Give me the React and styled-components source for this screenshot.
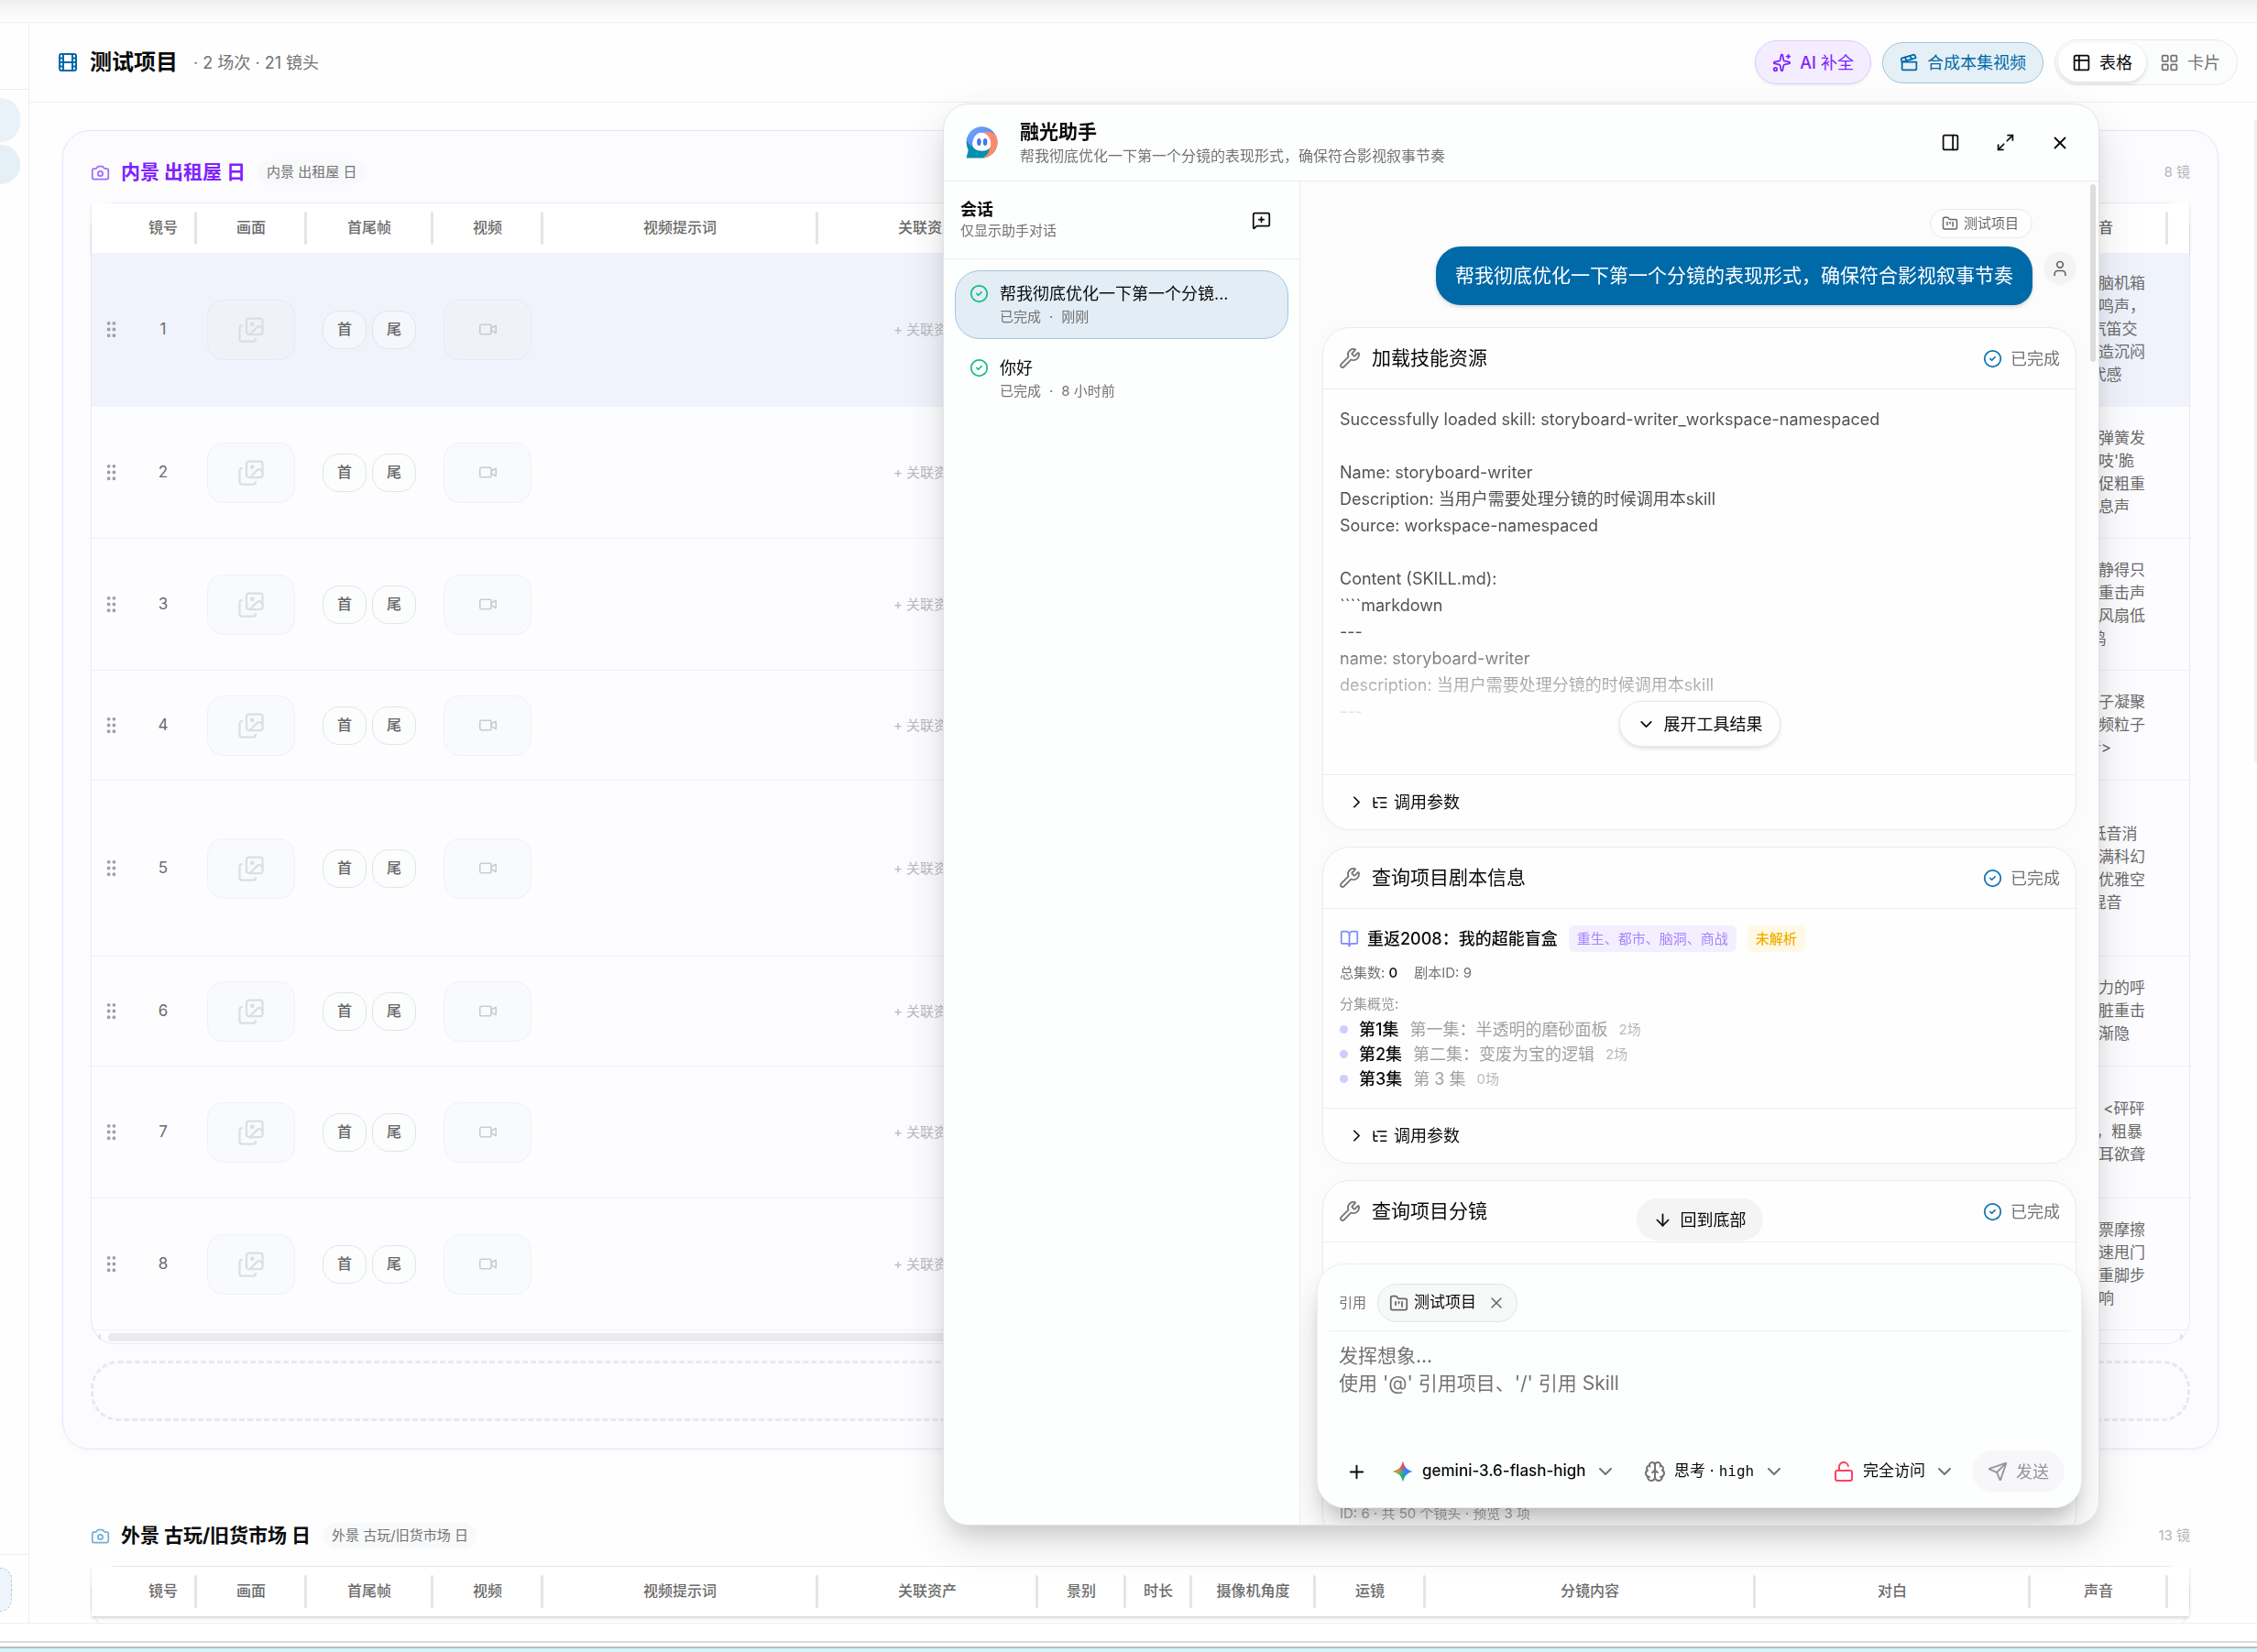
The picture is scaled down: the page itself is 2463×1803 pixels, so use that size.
import React from "react";
import styled, { createGlobalStyle, css } from "styled-components";
import {
  ArrowDown, BookOpen, Brain, Camera, ChevronDown, ChevronRight, CircleCheck, Clapperboard,
  Film, FolderKanban, GripVertical, Images, LayoutGrid, ListTree, LockOpen, Maximize2,
  MessageSquarePlus, PanelRight, Plus, Send, Sparkles, Table2, User, Video, Wrench, X,
} from "lucide-react";

const Global = createGlobalStyle`
  * { box-sizing: border-box; }
  body {
    margin: 0;
    background: #fff;
    color: #0a0a0a;
    font-family: Inter, "Noto Sans CJK SC", sans-serif;
    font-size: 18px;
    line-height: 1.5;
  }
  button, select, textarea { font: inherit; color: inherit; }
  button { border: 0; padding: 0; background: none; cursor: pointer; }
  h1, h2, h3, p, ul { margin: 0; padding: 0; }
`;

/* ---------- shell ---------- */

const Page = styled.div`
  height: 100vh;
  display: flex;
  flex-direction: column;
  overflow: hidden;
`;
const TopStrip = styled.div`
  flex: none;
  height: 24px;
  background: linear-gradient(#efefef, #fff);
`;
const Workspace = styled.div`
  flex: 1;
  min-height: 0;
  display: flex;
  border-top: 1px solid #eceff0;
  border-bottom: 1px solid #eceeee;
  background: #fefefe;
`;
const BottomEdge = styled.div`
  flex: none;
  height: 31px;
  border-bottom: 4px solid #d3f3fa;
  background: linear-gradient(#fff 19px, #dadada 19px, #dadada 21px, #fff 21px, #fff 25px, #b3bfc1 25px);
`;

const Sidebar = styled.nav`
  flex: none;
  width: 32px;
  display: flex;
  flex-direction: column;
  border-right: 1px solid #ebefef;
`;
const SideTop = styled.div`
  height: 73px;
  border-bottom: 1px solid #e9eef0;
`;
const SideItems = styled.div`
  flex: 1;
  display: flex;
  flex-direction: column;
  gap: 3px;
  padding-top: 9px;
`;
const SideItem = styled.button`
  width: 22px;
  height: ${(p) => p.$h}px;
  border-radius: 0 21px 21px 0;
  background: ${(p) => p.$bg};
`;
const SideBottom = styled.div`
  height: 75px;
  padding-top: 14px;
  border-top: 1px solid #ebefef;
`;
const SideAdd = styled.button`
  display: block;
  width: 13px;
  height: 48px;
  border: 1px dashed #a9cde6;
  border-left: 0;
  border-radius: 0 21px 21px 0;
  background: #eff5fb;
`;

const Main = styled.main`
  flex: 1;
  min-width: 0;
  display: flex;
  flex-direction: column;
`;
const MainHeader = styled.header`
  flex: none;
  height: 87px;
  display: flex;
  align-items: center;
  gap: 12px;
  padding: 0 21px 0 30px;
  border-bottom: 1px solid #eceeef;
`;
const ProjectTitle = styled.h1`
  font-size: 24px;
  line-height: 36px;
  font-weight: 700;
`;
const Muted = styled.span`
  color: #737373;
  font-size: 18px;
`;
const HeaderActions = styled.div`
  margin-left: auto;
  display: flex;
  align-items: center;
  gap: 12px;
`;
const PillButton = styled.button`
  display: flex;
  align-items: center;
  gap: 9px;
  height: ${(p) => p.$h}px;
  padding: 0 18px;
  border-radius: 24px;
  font-size: 18px;
  b { font-weight: 500; }
  ${(p) =>
    p.$tone === "violet"
      ? css`color: #7f22fe; background: #f3edff; border: 1px solid #dccbfd; box-shadow: 0 2px 3px rgba(0,0,0,.05);`
      : css`color: #0069a8; background: #e5f0f6; border: 1px solid #9cc5df;`}
`;
const Segmented = styled.div`
  display: flex;
  align-items: center;
  height: 50px;
  padding: 3px;
  border: 1px solid #e9eaea;
  border-radius: 25px;
  background: #fbfcfc;
`;
const Segment = styled.button`
  display: flex;
  align-items: center;
  gap: 9px;
  height: 42px;
  padding: 0 15px;
  border-radius: 21px;
  font-size: 18px;
  color: ${(p) => (p.$on ? "#0a0a0a" : "#737373")};
  ${(p) => p.$on && css`background: #fff; box-shadow: 0 2px 5px rgba(0,0,0,.14);`}
`;

const Body = styled.div`
  flex: 1;
  min-height: 0;
  display: flex;
  overflow: hidden;
`;
const Sections = styled.div`
  flex: 1;
  min-width: 0;
  display: flex;
  flex-direction: column;
  gap: 48px;
  padding: 30px 36px 0;
`;
const PageScroll = styled.div`
  flex: none;
  width: 6px;
  padding: 18px 0 0 3px;
`;
const PageThumb = styled.div`
  height: 702px;
  border-radius: 3px 0 0 3px;
  background: #eeefef;
`;

/* ---------- scene sections ---------- */

const SceneCard = styled.section`
  flex: none;
  padding: 30px;
  border: 1px solid ${(p) => (p.$active ? "#e9e2fd" : "transparent")};
  border-radius: 30px;
  ${(p) => p.$active && css`background: #fcfcff; box-shadow: 0 3px 9px rgba(90,70,160,.03);`}
`;
const SceneHead = styled.div`
  display: flex;
  align-items: center;
  height: 30px;
  margin-bottom: 18px;
  > svg { color: ${(p) => (p.$active ? "#a368fe" : "#72b0d8")}; }
`;
const SceneTitle = styled.h2`
  margin-left: 12px;
  font-size: 21px;
  line-height: 30px;
  font-weight: 700;
  color: ${(p) => (p.$active ? "#7f22fe" : "#0a0a0a")};
`;
const SceneTag = styled.span`
  margin-left: 14px;
  padding: 0 9px;
  border-radius: 14px;
  background: #f8f9fa;
  color: #737373;
  font-size: 15px;
  line-height: 28px;
`;
const ShotCount = styled.span`
  margin-left: auto;
  color: #b4b4b6;
  font-size: 15px;
`;
const TableBox = styled.div`
  border: 1px solid #e9eaee;
  border-radius: 27px;
  background: rgba(255,255,255,.3);
`;
const ShotTable = styled.table`
  width: 100%;
  table-layout: fixed;
  border-collapse: separate;
  border-spacing: 0;
`;
const HeadRow = styled.tr`
  background: #fff;
  box-shadow: 0 2px 3px rgba(0,0,0,.16);
`;
const Th = styled.th`
  position: relative;
  height: 54px;
  padding: 0 0 3px;
  color: #6b6b6b;
  font-size: 16px;
  font-weight: 500;
  ${(p) =>
    p.$handle &&
    css`
      &::after {
        content: "";
        position: absolute;
        top: 9px;
        bottom: 9px;
        right: -1px;
        width: 3px;
        border-radius: 2px;
        background: #e5e5e5;
      }
    `}
`;
const ShotRow = styled.tr`
  height: ${(p) => p.$h}px;
  background: ${(p) => (p.$selected ? "#f0f3fc" : "transparent")};
`;
const Td = styled.td`
  padding: 0;
  border-bottom: 1px solid #f0f1f4;
  color: #6b6b6b;
  font-size: 17px;
  line-height: 25px;
  text-align: center;
  vertical-align: middle;
  white-space: pre-line;
  > svg { display: block; margin: 0 auto; color: #a0a0a3; }
`;
const Thumb = styled.button`
  width: 96px;
  height: 66px;
  display: inline-flex;
  align-items: center;
  justify-content: center;
  vertical-align: middle;
  border: 1px solid rgba(20,60,60,.045);
  border-radius: 18px;
  background: rgba(238,244,240,.24);
  color: ${(p) => (p.$strong ? "#c9cbce" : "#dcdee0")};
`;
const FramePair = styled.div`
  display: flex;
  justify-content: center;
  gap: 6px;
`;
const FrameButton = styled.button`
  width: 48px;
  height: 42px;
  border: 1px solid #e3e5e8;
  border-radius: 18px;
  background: rgba(250,252,250,.4);
  color: #666;
  font-size: 16px;
  font-weight: 500;
`;
const LinkAsset = styled.button`
  color: #b9babd;
  font-size: 15px;
`;
const ScrollRow = styled.div`
  display: flex;
  align-items: center;
  gap: 8px;
  height: 14px;
  padding: 0 6px;
`;
const ScrollTrack = styled.div`
  flex: 1;
`;
const ScrollThumb = styled.div`
  width: 82%;
  height: 9px;
  border-radius: 4px;
  background: #ebebed;
`;
const ScrollArrow = styled.span`
  border: 4px solid transparent;
  ${(p) => (p.$right ? "border-left-color: #e2e2e5; border-right-width: 0;" : "border-right-color: #e2e2e5; border-left-width: 0;")}
`;
const DropZone = styled.div`
  height: 66px;
  margin-top: 18px;
  border: 3px dashed #e9e9ec;
  border-radius: 30px;
`;

const columns = [
  ["", 42], ["镜号", 72, 1], ["画面", 120, 1], ["首尾帧", 138, 1], ["视频", 120, 1], ["视频提示词", 300, 1],
  ["关联资产", 240, 1], ["景别", 96, 1], ["时长", 72, 1], ["摄像机角度", 135, 1], ["运镜", 120, 1],
  ["分镜内容", 360, 1], ["对白", 300, 1], ["声音", 150, 1], ["", 0],
];

const shots = [
  { h: 168, sound: "老旧电脑机箱\n低沉嗡鸣声，\n远处汽笛交\n织，营造沉闷\n年代感" },
  { h: 144, sound: "床垫旧弹簧发\n出'咯吱'脆\n响，急促粗重\n的喘息声" },
  { h: 144, sound: "四周安静得只\n剩心脏重击声\n和老旧风扇低\n鸣" },
  { h: 120, sound: "蓝光粒子凝聚\n声，高频粒子\n音>" },
  { h: 192, sound: "超重低音消\n失，充满科幻\n感且极优雅空\n灵混音" },
  { h: 120, sound: "急促有力的呼\n吸与心脏重击\n声音渐隐" },
  { h: 144, sound: "剧烈敲 <砰砰\n砰砰>，粗暴\n吼叫震耳欲聋" },
  { h: 144, sound: "指尖钞票摩擦\n声，快速甩门\n声与沉重脚步\n声响" },
];

function Shots({ rows }) {
  return (
    <ShotTable>
      <colgroup>
        {columns.map(([, w], i) => <col key={i} style={w ? { width: w } : undefined} />)}
      </colgroup>
      <thead>
        <HeadRow>
          {columns.map(([label, , handle], i) => <Th key={i} $handle={handle}>{label}</Th>)}
        </HeadRow>
      </thead>
      <tbody>
        {rows.map((s, i) => (
          <ShotRow key={i} $h={s.h} $selected={i === 0}>
            <Td><GripVertical size={23} /></Td>
            <Td>{i + 1}</Td>
            <Td><Thumb aria-label="画面"><Images size={30} strokeWidth={1.8} /></Thumb></Td>
            <Td>
              <FramePair>
                <FrameButton>首</FrameButton>
                <FrameButton>尾</FrameButton>
              </FramePair>
            </Td>
            <Td><Thumb $strong aria-label="视频"><Video size={21} strokeWidth={1.8} /></Thumb></Td>
            <Td />
            <Td><LinkAsset>+ 关联资产</LinkAsset></Td>
            <Td /><Td /><Td /><Td /><Td /><Td />
            <Td>{s.sound}</Td>
            <Td />
          </ShotRow>
        ))}
      </tbody>
    </ShotTable>
  );
}

function Scene({ active, title, count, rows = [] }) {
  return (
    <SceneCard $active={active}>
      <SceneHead $active={active}>
        <Camera size={21} />
        <SceneTitle $active={active}>{title}</SceneTitle>
        <SceneTag>{title}</SceneTag>
        <ShotCount>{count} 镜</ShotCount>
      </SceneHead>
      <TableBox>
        <Shots rows={rows} />
        <ScrollRow>
          {active && (
            <>
              <ScrollArrow />
              <ScrollTrack><ScrollThumb /></ScrollTrack>
              <ScrollArrow $right />
            </>
          )}
        </ScrollRow>
      </TableBox>
      {active && <DropZone />}
    </SceneCard>
  );
}

/* ---------- assistant window ---------- */

const Assistant = styled.aside`
  position: fixed;
  top: 113px;
  right: 172px;
  bottom: 138px;
  width: 1262px;
  display: flex;
  flex-direction: column;
  overflow: hidden;
  border: 1px solid #e2e3e3;
  border-radius: 28px;
  background: #fdfefe;
  box-shadow: 0 18px 48px rgba(0,0,0,.12), 0 15px 24px -6px rgba(0,0,0,.12);
`;
const AssistantHead = styled.header`
  flex: none;
  height: 84px;
  display: flex;
  align-items: center;
  gap: 24px;
  padding: 0 18px 0 24px;
  border-bottom: 1px solid #ebeded;
`;
const HeadText = styled.div`
  flex: 1;
`;
const AssistantTitle = styled.h2`
  font-size: 21px;
  line-height: 28px;
  font-weight: 700;
`;
const AssistantSub = styled.p`
  color: #737373;
  font-size: 16px;
  line-height: 24px;
`;
const HeadTools = styled.div`
  display: flex;
  gap: 12px;
`;
const IconButton = styled.button`
  width: 48px;
  height: 48px;
  display: flex;
  align-items: center;
  justify-content: center;
`;
const AssistantBody = styled.div`
  flex: 1;
  min-height: 0;
  display: flex;
`;
const Sessions = styled.div`
  flex: none;
  width: 389px;
  border-right: 1px solid #ebeded;
`;
const SessionsHead = styled.div`
  height: 85px;
  display: flex;
  align-items: center;
  justify-content: space-between;
  padding: 0 18px;
  border-bottom: 1px solid #eef0f0;
`;
const SessionsTitle = styled.h3`
  font-size: 18px;
  line-height: 24px;
  font-weight: 700;
`;
const Small = styled.p`
  color: #737373;
  font-size: 15px;
  line-height: 22px;
`;
const SessionList = styled.div`
  display: flex;
  flex-direction: column;
  gap: 6px;
  padding: 12px;
`;
const Session = styled.button`
  height: 75px;
  display: flex;
  gap: 12px;
  padding: 11px 15px;
  text-align: left;
  border: 1px solid ${(p) => (p.$on ? "#9fc6e0" : "transparent")};
  border-radius: 27px;
  background: ${(p) => (p.$on ? "#e3edf5" : "transparent")};
  > svg { flex: none; margin-top: 3px; color: #10bc82; }
`;
const SessionName = styled.p`
  font-size: 18px;
  line-height: 27px;
`;
const SessionMeta = styled(Small)`
  display: flex;
  gap: 9px;
  line-height: 24px;
`;

const Conversation = styled.div`
  position: relative;
  flex: 1;
  min-width: 0;
  overflow: hidden;
  background: #fcfcfd;
`;
const ConvThumb = styled.div`
  position: absolute;
  top: 3px;
  right: 3px;
  width: 6px;
  height: 194px;
  border-radius: 3px;
  background: #dcdddd;
`;
const Messages = styled.div`
  display: flex;
  flex-direction: column;
  padding: 30px 24px 0;
`;
const UserRef = styled.span`
  align-self: flex-end;
  display: flex;
  align-items: center;
  gap: 6px;
  height: 32px;
  margin: 0 48px 9px 0;
  padding: 0 14px 0 12px;
  border: 1px solid #e9ebeb;
  border-radius: 16px;
  background: #fefefe;
  color: #666;
  font-size: 15px;
`;
const UserRow = styled.div`
  display: flex;
  justify-content: flex-end;
  gap: 12px;
  margin-bottom: 24px;
`;
const Bubble = styled.p`
  padding: 17px 21px;
  border-radius: 27px 27px 21px 27px;
  background: #0069a8;
  color: #fff;
  font-size: 21px;
  line-height: 30px;
  box-shadow: 0 2px 4px rgba(0,0,0,.15);
`;
const Avatar = styled.span`
  width: 36px;
  height: 36px;
  margin-top: 6px;
  display: flex;
  align-items: center;
  justify-content: center;
  border-radius: 50%;
  background: #f4f4f4;
  color: #666;
`;
const ToolCard = styled.article`
  margin-bottom: 18px;
  border: 1px solid #e9ebeb;
  border-radius: 30px;
  background: #fefefe;
  box-shadow: 0 2px 24px rgba(0,0,0,.02);
`;
const ToolHead = styled.header`
  height: 67px;
  display: flex;
  align-items: center;
  gap: 12px;
  padding: 0 17px;
  border-bottom: 1px solid #ebeded;
  > svg { color: #737373; }
`;
const ToolName = styled.h3`
  flex: 1;
  font-size: 21px;
  font-weight: 400;
`;
const Status = styled.span`
  display: flex;
  align-items: center;
  gap: 9px;
  color: #737373;
  font-size: 18px;
  svg { color: #0f72b0; }
`;
const ToolBody = styled.div`
  position: relative;
  padding: 18px;
`;
const Result = styled.pre`
  height: 384px;
  margin: 0;
  overflow: hidden;
  font: inherit;
  color: #525252;
  font-size: 18px;
  line-height: 29px;
  mask-image: linear-gradient(#000 250px, transparent 350px);
`;
const Floating = styled.button`
  position: absolute;
  left: 50%;
  transform: translateX(-50%);
  display: flex;
  align-items: center;
  gap: 9px;
  padding: 0 18px;
  border-radius: 25px;
  font-size: 18px;
`;
const Expand = styled(Floating)`
  bottom: 30px;
  height: 50px;
  border: 1px solid #e8e9e9;
  background: #fefefe;
  box-shadow: 0 2px 4px rgba(0,0,0,.12);
`;
const ToBottom = styled(Floating)`
  bottom: 310px;
  height: 46px;
  background: #f4f4f4;
`;
const ToolFoot = styled.button`
  width: 100%;
  height: 60px;
  display: flex;
  align-items: center;
  gap: 6px;
  padding: 0 26px;
  border-top: 1px solid #ebeded;
  font-size: 18px;
`;

const ScriptRow = styled.div`
  display: flex;
  align-items: center;
  gap: 12px;
`;
const ScriptName = styled.span`
  display: flex;
  align-items: center;
  gap: 9px;
  font-size: 18px;
  font-weight: 500;
  > svg { color: #818cf8; }
`;
const Tag = styled.span`
  padding: 0 9px;
  border-radius: 6px;
  font-size: 15px;
  line-height: 29px;
  font-weight: ${(p) => (p.$amber ? 500 : 400)};
  color: ${(p) => (p.$amber ? "#f0b000" : "#a684ff")};
  background: ${(p) => (p.$amber ? "#fff8e5" : "#f4efff")};
`;
const Facts = styled(Small)`
  display: flex;
  gap: 18px;
  margin: 12px 0;
  b { color: #0a0a0a; font-weight: 500; }
`;
const Dim = styled(Small)`
  margin-bottom: 3px;
  color: #999;
`;
const Episodes = styled.ul`
  list-style: none;
`;
const Episode = styled.li`
  display: flex;
  align-items: center;
  gap: 12px;
  line-height: 27px;
  color: #a1a1a1;
  &::before {
    content: "";
    width: 9px;
    height: 9px;
    border-radius: 50%;
    background: #cacfff;
  }
  b { color: #0a0a0a; font-weight: 500; }
  small { font-size: 15px; color: #b9b9b9; }
`;
const Preview = styled.div`
  min-height: 325px;
  display: flex;
  align-items: flex-end;
  padding: 18px;
`;
const PreviewNote = styled(Small)`
  color: #a3a3a3;
`;

const Composer = styled.form`
  position: absolute;
  left: 18px;
  right: 18px;
  bottom: 18px;
  height: 267px;
  display: flex;
  flex-direction: column;
  border: 1px solid #eceeee;
  border-radius: 30px;
  background: #fdfefe;
  box-shadow: 0 24px 36px -6px rgba(0,0,0,.2), 0 12px 15px -6px rgba(0,0,0,.1);
`;
const RefRow = styled.div`
  display: flex;
  align-items: center;
  gap: 12px;
  margin: 0 12px;
  padding: 21px 11px 9px;
  border-bottom: 1px solid #eff1f1;
  color: #737373;
  font-size: 15px;
`;
const RefChip = styled.span`
  display: flex;
  align-items: center;
  gap: 6px;
  height: 42px;
  padding: 0 12px;
  border: 1px solid #e4e5e5;
  border-radius: 21px;
  background: #f7f8f8;
  color: #0a0a0a;
  font-size: 17px;
  svg { display: block; color: #666; }
  button { margin-left: 6px; }
`;
const Prompt = styled.textarea`
  flex: 1;
  padding: 12px 23px 0;
  border: 0;
  outline: 0;
  resize: none;
  background: none;
  font-size: 21px;
  line-height: 30px;
  &::placeholder { color: #737373; }
`;
const Toolbar = styled.div`
  display: flex;
  align-items: center;
  padding: 0 18px 15px;
`;
const Picker = styled.label`
  display: flex;
  align-items: center;
  gap: 9px;
  padding: 0 15px;
  font-size: 17px;
  > svg:last-child { color: #737373; }
  > svg:first-child { color: ${(p) => p.$icon || "#737373"}; }
`;
const PickerText = styled.span`
  display: flex;
  gap: 5px;
  align-items: center;
`;
const Choice = styled.select`
  appearance: none;
  padding: 0;
  border: 0;
  outline: 0;
  background: none;
  font-family: ${(p) => (p.$mono ? `"DejaVu Sans Mono", monospace` : "inherit")};
  font-size: ${(p) => (p.$mono ? 16 : 17)}px;
  font-weight: ${(p) => (p.$medium ? 500 : 400)};
`;
const SendButton = styled.button`
  display: flex;
  align-items: center;
  gap: 9px;
  height: 46px;
  margin-left: 3px;
  padding: 0 17px;
  border-radius: 23px;
  background: #f7f7fa;
  color: #969698;
  font-size: 18px;
`;
const Spacer = styled.div`
  flex: 1;
`;

function Logo() {
  return (
    <svg width="35" height="35" viewBox="0 0 34 34" aria-hidden="true">
      <defs>
        <linearGradient id="lg" x1="0" y1="0" x2="1" y2="1">
          <stop offset="0" stopColor="#74a7ff" />
          <stop offset="1" stopColor="#4a7ff0" />
        </linearGradient>
      </defs>
      <path d="M17 0.5C8 0.5 1 7.5 0.6 16.5c-.1 3 .9 6 2 8.500L0.500 33.500H17C26 33.500 33.500 26 33.500 17S26 .5 17 .5Z" fill="#068fae" />
      <path d="M1 14C2.500 6 9 .5 17 .5c6 0 11 3 14 8-6-3-12-3-16 1-4 4-5 8-5 13-4-1-8-4-9-8.500Z" fill="url(#lg)" />
      <path d="M18 6.500c5-2 10-1 13.500 2.500 1.500 3 2 5 2 8 0 9-7.500 16.500-16.500 16.500 5-2 8-6 8-11 2-6 0-12-7-16Z" fill="#ff8a6b" />
      <path d="M16.500 6.500c5.500 0 10 6 10 12 0 5-4 7.500-9.500 7.500S7 23.500 7 18.500c0-6 4-12 9.500-12Z" fill="#fff" />
      <ellipse cx="14" cy="16.500" rx="2.200" ry="3.800" fill="#3f78ee" />
      <ellipse cx="20.500" cy="16.500" rx="2.200" ry="3.800" fill="#3f78ee" />
    </svg>
  );
}

function GeminiMark() {
  const star = "M12 1c1.200 6 4.800 9.800 11 11-6.200 1.200-9.800 5-11 11-1.200-6-4.800-9.800-11-11 6.200-1.200 9.800-5 11-11Z";
  return (
    <svg width="24" height="24" viewBox="0 0 24 24" aria-hidden="true">
      <defs>
        <linearGradient id="gy" x1="0" x2="0.600" y1="0.500" y2="0.500">
          <stop offset="0" stopColor="#fbbc04" /><stop offset="0.400" stopColor="#fbbc04" /><stop offset="0.900" stopColor="#fbbc04" stopOpacity="0" />
        </linearGradient>
        <linearGradient id="gr" x1="0.400" x2="0.550" y1="0" y2="0.500">
          <stop offset="0" stopColor="#f94543" /><stop offset="0.350" stopColor="#f94543" /><stop offset="1" stopColor="#f94543" stopOpacity="0" />
        </linearGradient>
        <linearGradient id="gg" x1="0.400" x2="0.550" y1="1" y2="0.500">
          <stop offset="0" stopColor="#08b962" /><stop offset="0.350" stopColor="#08b962" /><stop offset="1" stopColor="#08b962" stopOpacity="0" />
        </linearGradient>
      </defs>
      <path d={star} fill="#3186ff" />
      <path d={star} fill="url(#gy)" />
      <path d={star} fill="url(#gr)" />
      <path d={star} fill="url(#gg)" />
    </svg>
  );
}

function Tool({ name, children, foot = true }) {
  return (
    <ToolCard>
      <ToolHead>
        <Wrench size={24} strokeWidth={1.8} />
        <ToolName>{name}</ToolName>
        <Status><CircleCheck size={21} />已完成</Status>
      </ToolHead>
      {children}
      {foot && (
        <ToolFoot>
          <ChevronRight size={21} />
          <ListTree size={18} />
          调用参数
        </ToolFoot>
      )}
    </ToolCard>
  );
}

const skillText = [
  "Successfully loaded skill: storyboard-writer_workspace-namespaced", "",
  "Name: storyboard-writer", "Description: 当用户需要处理分镜的时候调用本skill", "Source: workspace-namespaced", "",
  "Content (SKILL.md):", "````markdown", "---", "name: storyboard-writer",
  "description: 当用户需要处理分镜的时候调用本skill", "---",
].join("\n");

const episodes = [
  ["第1集", "第一集：半透明的磨砂面板", "2场"],
  ["第2集", "第二集：变废为宝的逻辑", "2场"],
  ["第3集", "第 3 集", "0场"],
];

const request = "帮我彻底优化一下第一个分镜的表现形式，确保符合影视叙事节奏";

function AssistantWindow() {
  return (
    <Assistant>
      <AssistantHead>
        <Logo />
        <HeadText>
          <AssistantTitle>融光助手</AssistantTitle>
          <AssistantSub>{request}</AssistantSub>
        </HeadText>
        <HeadTools>
          <IconButton aria-label="侧栏"><PanelRight size={21} /></IconButton>
          <IconButton aria-label="最大化"><Maximize2 size={21} /></IconButton>
          <IconButton aria-label="关闭"><X size={22} /></IconButton>
        </HeadTools>
      </AssistantHead>
      <AssistantBody>
        <Sessions>
          <SessionsHead>
            <div>
              <SessionsTitle>会话</SessionsTitle>
              <Small>仅显示助手对话</Small>
            </div>
            <IconButton aria-label="新建会话"><MessageSquarePlus size={21} /></IconButton>
          </SessionsHead>
          <SessionList>
            <Session $on>
              <CircleCheck size={21} />
              <div>
                <SessionName>帮我彻底优化一下第一个分镜...</SessionName>
                <SessionMeta><span>已完成</span><span>·</span><span>刚刚</span></SessionMeta>
              </div>
            </Session>
            <Session>
              <CircleCheck size={21} />
              <div>
                <SessionName>你好</SessionName>
                <SessionMeta><span>已完成</span><span>·</span><span>8 小时前</span></SessionMeta>
              </div>
            </Session>
          </SessionList>
        </Sessions>
        <Conversation>
          <Messages>
            <UserRef><FolderKanban size={18} />测试项目</UserRef>
            <UserRow>
              <Bubble>{request}</Bubble>
              <Avatar><User size={20} /></Avatar>
            </UserRow>
            <Tool name="加载技能资源">
              <ToolBody>
                <Result>{skillText}</Result>
                <Expand><ChevronDown size={21} />展开工具结果</Expand>
              </ToolBody>
            </Tool>
            <Tool name="查询项目剧本信息">
              <ToolBody>
                <ScriptRow>
                  <ScriptName><BookOpen size={21} />重返2008：我的超能盲盒</ScriptName>
                  <Tag>重生、都市、脑洞、商战</Tag>
                  <Tag $amber>未解析</Tag>
                </ScriptRow>
                <Facts><span>总集数: <b>0</b></span><span>剧本ID: 9</span></Facts>
                <Dim>分集概览:</Dim>
                <Episodes>
                  {episodes.map(([no, title, n]) => (
                    <Episode key={no}><b>{no}</b><span>{title}</span><small>{n}</small></Episode>
                  ))}
                </Episodes>
              </ToolBody>
            </Tool>
            <Tool name="查询项目分镜" foot={false}>
              <Preview>
                <PreviewNote>ID: 6 · 共 50 个镜头 · 预览 3 项</PreviewNote>
              </Preview>
            </Tool>
          </Messages>
          <ConvThumb />
          <ToBottom><ArrowDown size={21} />回到底部</ToBottom>
          <Composer>
            <RefRow>
              引用
              <RefChip>
                <FolderKanban size={21} />
                测试项目
                <button type="button" aria-label="移除引用"><X size={20} strokeWidth={1.8} /></button>
              </RefChip>
            </RefRow>
            <Prompt aria-label="消息" placeholder={"发挥想象...\n使用 '@' 引用项目、'/' 引用 Skill"} />
            <Toolbar>
              <IconButton type="button" aria-label="添加"><Plus size={23} /></IconButton>
              <Picker>
                <GeminiMark />
                <Choice $medium aria-label="模型"><option>gemini-3.6-flash-high</option></Choice>
                <ChevronDown size={24} />
              </Picker>
              <Picker>
                <Brain size={24} />
                <PickerText>思考 · <Choice $mono aria-label="思考强度"><option>high</option></Choice></PickerText>
                <ChevronDown size={24} />
              </Picker>
              <Spacer />
              <Picker $icon="#fb4263">
                <LockOpen size={24} />
                <Choice aria-label="权限"><option>完全访问</option></Choice>
                <ChevronDown size={24} />
              </Picker>
              <SendButton type="button"><Send size={22} />发送</SendButton>
            </Toolbar>
          </Composer>
        </Conversation>
      </AssistantBody>
    </Assistant>
  );
}

export default function App() {
  return (
    <Page>
      <Global />
      <TopStrip />
      <Workspace>
        <Sidebar>
          <SideTop />
          <SideItems>
            <SideItem $h={48} $bg="#eaf2f9" aria-label="项目" />
            <SideItem $h={43} $bg="#e5f0f6" aria-label="剧集" />
          </SideItems>
          <SideBottom><SideAdd aria-label="新建" /></SideBottom>
        </Sidebar>
        <Main>
          <MainHeader>
            <Film size={24} color="#0069a8" />
            <ProjectTitle>测试项目</ProjectTitle>
            <Muted>&nbsp;· 2 场次 · 21 镜头</Muted>
            <HeaderActions>
              <PillButton $tone="violet" $h={48}><Sparkles size={21} /><span><b>AI</b> 补全</span></PillButton>
              <PillButton $tone="blue" $h={45}><Clapperboard size={21} />合成本集视频</PillButton>
              <Segmented>
                <Segment $on aria-pressed="true"><Table2 size={21} />表格</Segment>
                <Segment aria-pressed="false"><LayoutGrid size={21} />卡片</Segment>
              </Segmented>
            </HeaderActions>
          </MainHeader>
          <Body>
            <Sections>
              <Scene active title="内景 出租屋 日" count={8} rows={shots} />
              <Scene title="外景 古玩/旧货市场 日" count={13} />
            </Sections>
            <PageScroll><PageThumb /></PageScroll>
          </Body>
        </Main>
      </Workspace>
      <BottomEdge />
      <AssistantWindow />
    </Page>
  );
}
